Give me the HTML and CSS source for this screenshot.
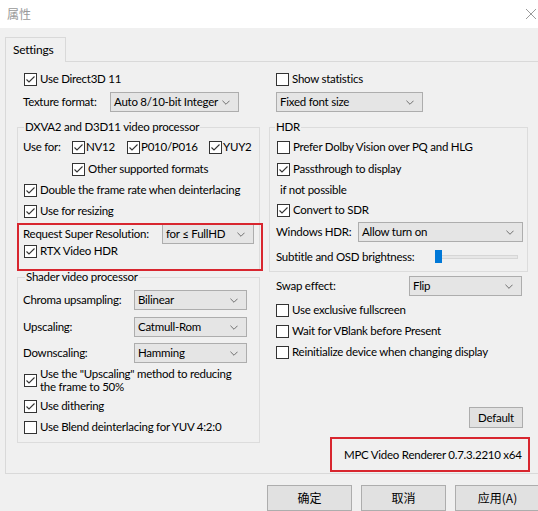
FILE: index.html
```html
<!DOCTYPE html>
<html>
<head>
<meta charset="utf-8">
<link rel="stylesheet" href="styles.css">
</head>
<body>
<div class="titlebar">
  <span class="title">属性</span>
  <svg class="close" width="10" height="10" viewBox="0 0 10 10"><path d="M0 0L10 10M10 0L0 10" stroke="#9a9a9a" stroke-width="1" fill="none"/></svg>
</div>
<div class="sheet">
  <div class="tab">Settings</div>
  <div class="panel">
    <div class="col">
      <div class="row chk mt7"><span class="cb"><svg viewBox="0 0 11 11"><path d="M1.5 5.5L4 8L9.5 2.5"/></svg></span>Use Direct3D 11</div>
      <div class="row mt3"><span class="lbl w87">Texture format:</span><div class="sel w129">Auto 8/10-bit Integer<svg class="chev" viewBox="0 0 9 5"><path d="M0.5 0.5L4.5 4.5L8.5 0.5"/></svg></div></div>
      <fieldset class="grp gap8 dxva">
        <legend>DXVA2 and D3D11 video processor</legend>
        <div class="row mt3 usefor">
          <span class="lbl w49">Use for:</span>
          <span class="item w55"><span class="cb"><svg viewBox="0 0 11 11"><path d="M1.5 5.5L4 8L9.5 2.5"/></svg></span>NV12</span>
          <span class="item w82"><span class="cb"><svg viewBox="0 0 11 11"><path d="M1.5 5.5L4 8L9.5 2.5"/></svg></span>P010/P016</span>
          <span class="item"><span class="cb"><svg viewBox="0 0 11 11"><path d="M1.5 5.5L4 8L9.5 2.5"/></svg></span>YUY2</span>
        </div>
        <div class="row mt2 other"><span class="cb"><svg viewBox="0 0 11 11"><path d="M1.5 5.5L4 8L9.5 2.5"/></svg></span>Other supported formats</div>
        <div class="row chk mt1"><span class="cb"><svg viewBox="0 0 11 11"><path d="M1.5 5.5L4 8L9.5 2.5"/></svg></span>Double the frame rate when deinterlacing</div>
        <div class="row chk mt1"><span class="cb"><svg viewBox="0 0 11 11"><path d="M1.5 5.5L4 8L9.5 2.5"/></svg></span>Use for resizing</div>
        <div class="hl">
          <div class="row mt3"><span class="lbl w139">Request Super Resolution:</span><div class="sel w92">for ≤ FullHD<svg class="chev" viewBox="0 0 9 5"><path d="M0.5 0.5L4.5 4.5L8.5 0.5"/></svg></div></div>
          <div class="row chk h14"><span class="cb"><svg viewBox="0 0 11 11"><path d="M1.5 5.5L4 8L9.5 2.5"/></svg></span>RTX Video HDR</div>
        </div>
      </fieldset>
      <fieldset class="grp shader">
        <legend>Shader video processor</legend>
        <div class="row mt6"><span class="lbl w111">Chroma upsampling:</span><div class="sel w113">Bilinear<svg class="chev" viewBox="0 0 9 5"><path d="M0.5 0.5L4.5 4.5L8.5 0.5"/></svg></div></div>
        <div class="row mt7"><span class="lbl w111">Upscaling:</span><div class="sel w113">Catmull-Rom<svg class="chev" viewBox="0 0 9 5"><path d="M0.5 0.5L4.5 4.5L8.5 0.5"/></svg></div></div>
        <div class="row mt6"><span class="lbl w111">Downscaling:</span><div class="sel w113">Hamming<svg class="chev" viewBox="0 0 9 5"><path d="M0.5 0.5L4.5 4.5L8.5 0.5"/></svg></div></div>
        <div class="row chk two mt4"><span class="cb"><svg viewBox="0 0 11 11"><path d="M1.5 5.5L4 8L9.5 2.5"/></svg></span><span class="twotext"><span class="ln">Use the "Upscaling" method to reducing</span><span class="ln">the frame to 50%</span></span></div>
        <div class="row chk mt3"><span class="cb"><svg viewBox="0 0 11 11"><path d="M1.5 5.5L4 8L9.5 2.5"/></svg></span>Use dithering</div>
        <div class="row chk mt1"><span class="cb"></span>Use Blend deinterlacing for YUV 4:2:0</div>
      </fieldset>
    </div>
    <div class="col">
      <div class="row chk mt7"><span class="cb"></span>Show statistics</div>
      <div class="row mt3 ind7"><div class="sel w147">Fixed font size<svg class="chev" viewBox="0 0 9 5"><path d="M0.5 0.5L4.5 4.5L8.5 0.5"/></svg></div></div>
      <fieldset class="grp gap8 hdr">
        <legend>HDR</legend>
        <div class="row chk mt3"><span class="cb"></span>Prefer Dolby Vision over PQ and HLG</div>
        <div class="row chk mt2"><span class="cb"><svg viewBox="0 0 11 11"><path d="M1.5 5.5L4 8L9.5 2.5"/></svg></span>Passthrough to display</div>
        <div class="row mt1 notpos">if not possible</div>
        <div class="row chk"><span class="cb"><svg viewBox="0 0 11 11"><path d="M1.5 5.5L4 8L9.5 2.5"/></svg></span>Convert to SDR</div>
        <div class="row mt2"><span class="lbl w82">Windows HDR:</span><div class="sel w165">Allow turn on<svg class="chev" viewBox="0 0 9 5"><path d="M0.5 0.5L4.5 4.5L8.5 0.5"/></svg></div></div>
        <div class="row mt5"><span class="lbl w159">Subtitle and OSD brightness:</span><div class="slider"><span class="thumb"></span></div></div>
      </fieldset>
      <div class="row mt4 ind7"><span class="lbl w133">Swap effect:</span><div class="sel w113">Flip<svg class="chev" viewBox="0 0 9 5"><path d="M0.5 0.5L4.5 4.5L8.5 0.5"/></svg></div></div>
      <div class="row chk mt4"><span class="cb"></span>Use exclusive fullscreen</div>
      <div class="row chk mt1"><span class="cb"></span>Wait for VBlank before Present</div>
      <div class="row chk mt1"><span class="cb"></span>Reinitialize device when changing display</div>
      <div class="btn default">Default</div>
      <div class="version">MPC Video Renderer 0.7.3.2210 x64</div>
    </div>
  </div>
  <div class="buttons">
    <div class="btn big">确定</div>
    <div class="btn big">取消</div>
    <div class="btn big">应用(A)</div>
  </div>
</div>
</body>
</html>
```

FILE: styles.css
```css
* { box-sizing: border-box; }
body {
  margin: 0;
  width: 538px;
  height: 511px;
  overflow: hidden;
  background: #f0f0f0;
  color: #000;
  font-family: Lato, "Noto Sans CJK SC", sans-serif;
  font-size: 11.5px;
  letter-spacing: -0.25px;
  line-height: 14px;
}
.titlebar {
  height: 28px;
  background: #fff;
  display: flex;
  align-items: center;
  justify-content: space-between;
  padding-left: 7px;
}
.title {
  color: #999;
  font-family: "Noto Sans CJK SC", sans-serif;
  font-size: 12px;
  letter-spacing: 0;
}
.close { margin-right: 2px; }
.sheet { padding: 9px 0 0 5px; }
.tab {
  position: relative;
  z-index: 1;
  width: 61px;
  height: 25px;
  margin-bottom: -1px;
  border: 1px solid #d9d9d9;
  border-bottom: none;
  background: #f0f0f0;
  padding-left: 7px;
  line-height: 23px;
  font-size: 12px;
}
.panel {
  width: 545px;
  height: 413px;
  border: 1px solid #d9d9d9;
  display: grid;
  grid-template-columns: 243px 259px;
  column-gap: 9px;
  padding-left: 11px;
  align-items: start;
}
.col { display: flex; flex-direction: column; }
.row {
  display: flex;
  align-items: center;
  height: 20px;
  padding-left: 6px;
  white-space: nowrap;
}
.grp .row { padding-left: 0; }
.row.chk { padding-left: 7px; }
.grp .row.chk { padding-left: 1px; }
.grp .other { padding-left: 49px; }
.grp .notpos { padding-left: 4px; }
.h14 { height: 14px; }
.mt1 { margin-top: 1px; }
.mt2 { margin-top: 2px; }
.mt3 { margin-top: 3px; }
.mt4 { margin-top: 4px; }
.mt5 { margin-top: 5px; }
.mt6 { margin-top: 6px; }
.mt7 { margin-top: 7px; }
.ind7 { padding-left: 7px; }
.lbl { flex: none; }
.w49 { width: 49px; }
.w55 { width: 55px; }
.w82 { width: 82px; }
.w87 { width: 87px; }
.w111 { width: 111px; }
.w133 { width: 133px; }
.w139 { width: 139px; }
.w159 { width: 159px; }
.item { display: flex; align-items: center; flex: none; }
.usefor .item .cb { margin-right: 1px; }
.cb {
  flex: none;
  width: 13px;
  height: 13px;
  border: 1px solid #333;
  background: #fff;
  margin-right: 3px;
  display: flex;
}
.cb svg {
  width: 11px;
  height: 11px;
  fill: none;
  stroke: #333;
  stroke-width: 1.1;
}
.two { height: 26px; }
.twotext { display: flex; flex-direction: column; }
.ln { display: block; height: 13px; line-height: 13px; }
.sel {
  flex: none;
  height: 20px;
  border: 1px solid #adadad;
  background: #e5e5e5;
  padding: 0 8px 0 3px;
  display: flex;
  align-items: center;
  justify-content: space-between;
}
.w92 { width: 92px; }
.w113 { width: 113px; }
.w129 { width: 129px; }
.w147 { width: 147px; }
.w165 { width: 165px; }
.chev {
  width: 8px;
  height: 5px;
  fill: none;
  stroke: #606060;
  stroke-width: 1;
}
.grp {
  margin: 0;
  min-width: 0;
  border: 1px solid #dcdcdc;
  padding: 0 4px 0 5px;
}
.grp.gap8 { margin-top: 8px; }
.grp legend {
  padding: 0 1px;
  line-height: 14px;
  height: 14px;
}
.dxva { padding-bottom: 11px; }
.dxva legend { margin-left: 1px; }
.shader { padding-bottom: 5px; }
.shader legend { margin-left: 2px; }
.hdr { padding: 0 4px 4px 6px; }
.hdr legend { margin-left: -1px; }
.hl { position: relative; }
.hl::after {
  content: "";
  position: absolute;
  top: -1px;
  left: -6px;
  right: -8px;
  bottom: -13px;
  border: 2px solid #d8262f;
  pointer-events: none;
}
.slider {
  position: relative;
  width: 83px;
  height: 4px;
  background: #e7e7e7;
  border: 1px solid #d6d6d6;
}
.thumb {
  position: absolute;
  left: -1px;
  top: -6px;
  width: 7px;
  height: 13px;
  background: #0078d7;
}
.btn {
  background: #e1e1e1;
  border: 1px solid #adadad;
  display: flex;
  align-items: center;
  justify-content: center;
}
.default {
  align-self: flex-end;
  margin: 45px 5px 0 0;
  width: 54px;
  height: 21px;
}
.version {
  margin: 9px -2px 0 61px;
  height: 35px;
  border: 2px solid #d8262f;
  padding-left: 12px;
  display: flex;
  align-items: center;
  white-space: nowrap;
}
.buttons {
  display: flex;
  gap: 9px;
  margin-top: 11px;
  padding-left: 262px;
}
.big {
  flex: none;
  width: 85px;
  height: 26px;
  font-family: "Noto Sans CJK SC", sans-serif;
  font-size: 12px;
  letter-spacing: 0;
}
```
